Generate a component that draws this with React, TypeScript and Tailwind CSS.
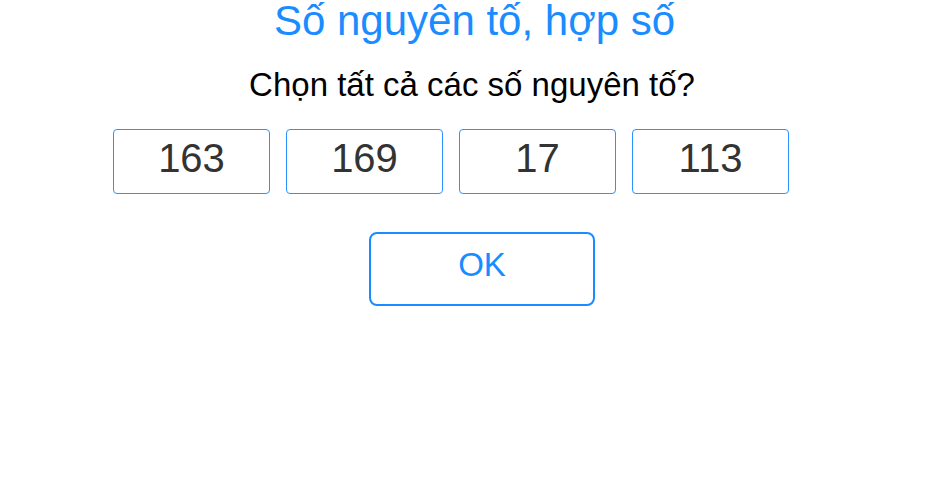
export default function App() {
  const options = ["163", "169", "17", "113"];

  return (
    <div className="w-[940px] h-[490px] bg-white font-['Liberation_Sans',Arial,sans-serif] flex flex-col items-center">
      <h1 className="text-[42px] leading-[42px] text-[#1a8cff] pl-[9px]">Số nguyên tố, hợp số</h1>
      <p className="text-[33px] leading-[38px] text-black mt-[24px] pl-[4px]">Chọn tất cả các số nguyên tố?</p>
      <div className="flex gap-[15.5px] mt-[25px] pr-[38px]">
        {options.map((n) => (
          <button
            key={n}
            className="w-[157.5px] h-[65px] pb-[8px] border border-[#2b95ff] rounded-[4px] bg-white text-[40px] text-[#333] flex items-center justify-center"
          >
            {n}
          </button>
        ))}
      </div>
      <button className="mt-[38px] ml-[24px] w-[226px] h-[74px] pb-[8px] border-2 border-[#1a8cff] rounded-[8px] bg-white text-[33px] text-[#1a8cff] flex items-center justify-center">
        OK
      </button>
    </div>
  );
}
